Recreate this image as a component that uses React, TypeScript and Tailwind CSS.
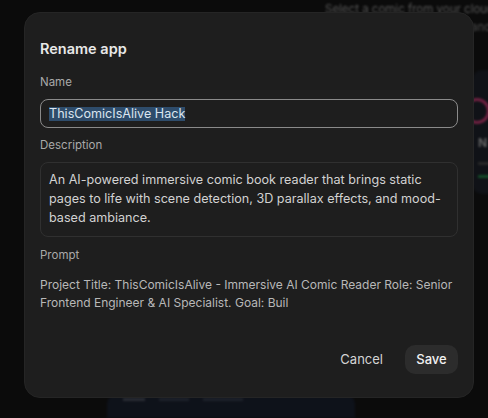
import React from "react";

export default function App() {
  return (
    <div className="relative h-[418px] w-[488px] overflow-hidden bg-[#111111]" style={{ fontFamily: "Inter, 'Noto Sans', sans-serif" }}>
      {/* background app content, blurred */}
      <div className="flex h-full flex-col blur-[1.2px]">
        <div className="flex flex-col gap-[4px] pl-[325px] pt-[2px]">
          <div className="whitespace-nowrap text-[11.5px] leading-[14px] text-[#7a7a7a]">Select a comic from your cloud</div>
          <div className="whitespace-nowrap pl-[146px] text-[11.5px] leading-[14px] text-[#6a6a6a]">and</div>
        </div>
        <div className="ml-[472px] mt-[36px] flex h-[124px] w-[60px] flex-col gap-[10px] rounded-[10px] bg-[#171a21] pl-[6px] pt-[28px]">
          <div className="h-[26px] w-[26px] -ml-[14px] rounded-full border-[3px] border-[#a0305e]" />
          <div className="text-[12px] font-bold text-[#8a8a8a]">N</div>
          <div className="h-[3px] w-[20px] bg-[#3a3a3a]" />
          <div className="h-[3px] w-[30px] bg-[#1e6a3a]" />
        </div>
        <div className="mt-auto ml-[107px] flex h-[24px] w-[248px] items-start gap-[14px] rounded-t-[10px] bg-[#151a26] px-[16px] pt-[4px]">
          <div className="h-[3px] w-[22px] bg-[#3a3f4a]" />
          <div className="h-[3px] w-[30px] bg-[#2a303c]" />
          <div className="h-[3px] w-[40px] bg-[#2a303c]" />
        </div>
      </div>
      <div className="absolute inset-0 bg-black/30" />

      {/* modal */}
      <div className="absolute left-[24px] top-[12px] flex h-[386px] w-[450px] flex-col rounded-[16px] border border-[#252525] bg-[#1e1e1e] px-[15px] pt-[25px]">
        <div className="text-[14.5px] font-semibold leading-[22px] text-[#e8e8e8]">Rename app</div>

        <div className="mt-[14px] text-[11.5px] leading-[16px] text-[#a9a9a9]">Name</div>
        <div className="mt-[9px] flex h-[29px] items-center rounded-[8px] border border-[#8a8a8a] px-[8px]">
          <span className="bg-[#2e4c6b] text-[12.6px] leading-[14px] text-[#dbe5ef]">ThisComicIsAlive Hack</span>
        </div>

        <div className="mt-[9px] text-[11.5px] leading-[16px] text-[#a9a9a9]">Description</div>
        <div className="mt-[9px] h-[75px] rounded-[8px] border border-[#303030] px-[8px] pt-[7px] text-[12.6px] leading-[19px] text-[#d2d2d2]">
          An AI-powered immersive comic book reader that brings static pages to life with scene detection, 3D parallax effects, and mood-based ambiance.
        </div>

        <div className="mt-[10px] text-[11.5px] leading-[16px] text-[#a9a9a9]">Prompt</div>
        <div className="mt-[13px] text-[12px] leading-[18px] text-[#b8b8b8]">
          Project Title: ThisComicIsAlive - Immersive AI Comic Reader Role: Senior Frontend Engineer &amp; AI Specialist. Goal: Buil
        </div>

        <div className="mt-auto mb-[23px] flex items-center justify-end gap-[10px]">
          <button className="h-[29px] rounded-[10px] px-[12px] text-[13px] text-[#d4d4d4]">Cancel</button>
          <button className="h-[29px] w-[53px] rounded-[10px] bg-[#2c2c2c] text-[13px] font-medium text-[#f2f2f2]">Save</button>
        </div>
      </div>
    </div>
  );
}
